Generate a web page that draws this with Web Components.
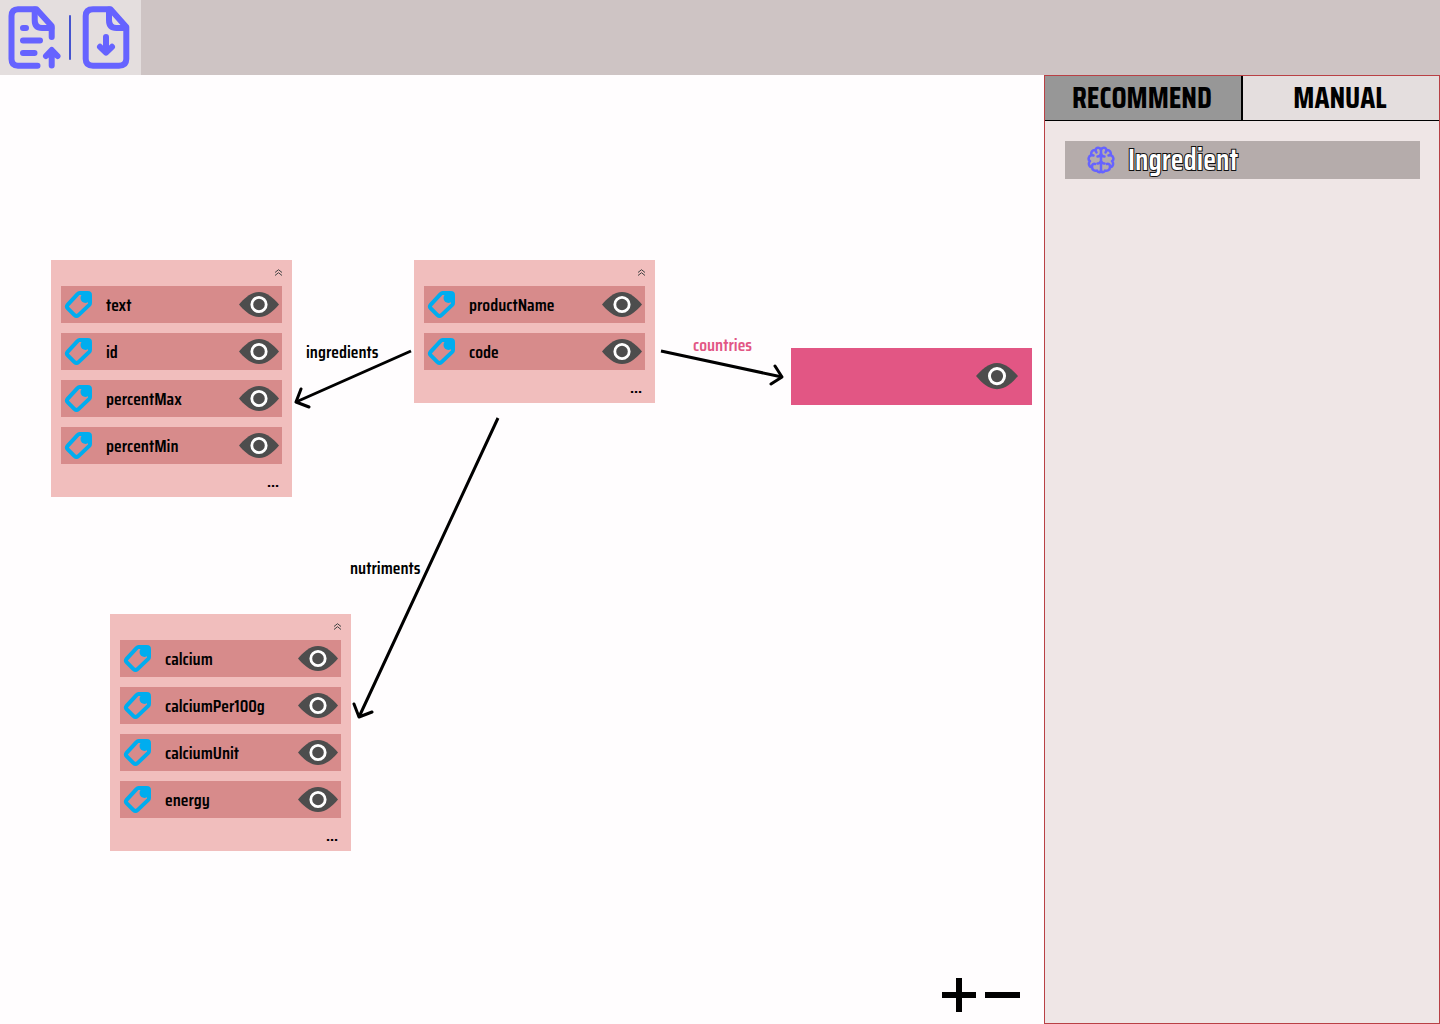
<!DOCTYPE html>
<html lang="en">
<head>
<meta charset="utf-8">
<title>Graph editor</title>
<style>
html, body { height: 100%; margin: 0; }
body { font-family: "Saira Condensed", "Liberation Sans Narrow", Roboto, sans-serif; color: #000; background: #fffdfe; }
</style>
</head>
<body>
<graph-app></graph-app>
<script>
const define = (name, html) => {
  const tpl = document.createElement('template');
  tpl.innerHTML = `<style>:host{display:block;box-sizing:border-box}*{box-sizing:border-box}button{font:inherit;color:inherit;border:0;padding:0;margin:0;background:none;cursor:pointer}svg{display:block}</style>` + html;
  customElements.define(name, class extends HTMLElement {
    constructor() {
      super();
      this.attachShadow({ mode: 'open' }).append(tpl.content.cloneNode(true));
    }
  });
};

define('icon-eye', `
<style>:host{width:40px}svg{width:100%}</style>
<svg viewBox="0 0 40 26" aria-hidden="true">
  <path d="M0 12.500C5 6.500 12 0 20 0S35 6.500 40 12.500C35 18.500 28 25 20 25S5 18.500 0 12.500Z" fill="#4d4d4d"/>
  <circle cx="20" cy="12.500" r="7.200" fill="none" stroke="#fff" stroke-width="2.800"/>
</svg>`);

define('icon-tag', `
<style>:host{width:28px}</style>
<svg width="28" height="28" viewBox="0 1 28 28" fill="none" aria-hidden="true">
  <path d="M15.500 2.500H23.800Q26 2.500 26 4.700V12.300Q26 13.500 25 14.500L14.500 24.500Q12.500 26.300 10.500 24.500L3.800 17.800Q2 16 3.800 14L13.500 3.500Q14.500 2.500 15.500 2.500Z" stroke="#00adef" stroke-width="4" stroke-linejoin="round" transform="translate(0 .6)"/>
  <circle cx="21.500" cy="8" r="5" fill="#00adef"/>
</svg>`);

const lobes = `
    <path d="M14 3.500C13 1 9 1 8.500 4C5.500 3.500 3.500 6 4.500 9C1.200 10 .8 14 3 15.200C.8 17.500 2.200 21 5 21C5 24 8 25.500 10 24.500C11 27 14 26.500 14 24.500"/>
    <path d="M8.500 4.500L9.500 6.500M4.500 9L6.500 9.500M5 20.500C5 18.500 6.500 17.500 8 18M14 8Q13.500 10.500 10.500 10.500M14 15.500Q12.500 18 10.500 17.500"/>`;
define('icon-brain', `
<style>:host{width:28px}</style>
<svg width="28" height="28" viewBox="0 0 28 28" fill="none" stroke="#6663ff" stroke-width="2.500" stroke-linecap="round" stroke-linejoin="round" aria-hidden="true">
  <g>${lobes}</g>
  <g transform="matrix(-1 0 0 1 28 0)">${lobes}</g>
  <path d="M14 3.500V24.500"/>
</svg>`);

define('tool-bar', `
<style>
:host{display:flex;height:75px;background:#cec4c4}
.tools{display:flex;align-items:center;gap:7px;padding:0 8px;background:#e4dede}
.tools i{width:2px;height:45px;border-radius:1px;background:#4553cf}
.tools svg{fill:none;stroke:#6663ff;stroke-width:6;stroke-linecap:round;stroke-linejoin:round}
</style>
<div class="tools" role="toolbar">
  <button aria-label="Import file"><svg width="54" height="64" viewBox="8 6 54 64">
    <path d="M37.500 65.700H18Q11.500 65.700 11.500 59V16Q11.500 9.200 18 9.200H36.500L51.700 26V37"/>
    <path d="M34.700 9.500V20Q34.700 28 42 28H51.500"/>
    <path d="M23 28H26M23 40.500H40M23 53H34.500M51.700 65.500V50.500M46 56L51.700 50L57.500 56"/>
  </svg></button>
  <i></i>
  <button aria-label="Download file"><svg width="55" height="64" viewBox="78 6 55 64">
    <path d="M110.500 9.200H93Q85.700 9.200 85.700 16V59Q85.700 65.700 93 65.700H119Q126.300 65.700 126.300 59V27Z"/>
    <path d="M109 9.500V20Q109 28 116.500 28H126M106 37V52M100 46.800L106 52.700L112 46.800"/>
  </svg></button>
</div>`);

define('property-row', `
<style>
:host{display:flex;align-items:center;height:37px;padding:0 3px;background:#d78b8b;font-size:18px;line-height:24px;font-weight:600}
span{flex:1;padding-left:14px}
</style>
<icon-tag></icon-tag><span><slot></slot></span>
<button aria-label="Toggle visibility"><icon-eye></icon-eye></button>`);

define('graph-node', `
<style>
:host{width:241px;padding:0 10px;background:#f1bebd}
header,footer{display:flex;justify-content:flex-end;align-items:flex-start}
header{height:26px;padding-top:9px}
.rows{display:flex;flex-direction:column;gap:10px}
footer{height:33px;padding:7px 3px 0 0;font-size:18px;line-height:20px;font-weight:600}
</style>
<header><button aria-label="Collapse"><svg width="7" height="7" viewBox="0 0 7 7" fill="none" stroke="#444" stroke-width="1"><path d="M0 3.500L3.500 .7L7 3.500M0 6.500L3.500 3.700L7 6.500"/></svg></button></header>
<div class="rows"><slot></slot></div>
<footer><button aria-label="More properties">...</button></footer>`);

define('literal-node', `
<style>
:host{display:flex;align-items:center;justify-content:flex-end;width:241px;height:57px;padding:1px 14px 0 0;background:#e25684}
icon-eye{width:42px}
</style>
<button aria-label="Toggle visibility"><icon-eye></icon-eye></button>`);

define('graph-canvas', `
<style>
:host{position:relative;overflow:hidden;font-size:18px;line-height:24px;font-weight:600}
.edges{position:absolute;left:0;top:0;overflow:visible;fill:none;stroke:#000;stroke-width:3;stroke-linejoin:round}
.heads{stroke-linecap:round}
graph-node,literal-node,.label{position:absolute}
.pink{color:#e25684}
.zoom{position:absolute;right:23px;bottom:11px;display:flex;gap:6px}
</style>
<svg class="edges" width="1040" height="940" viewBox="0 75 1040 940" aria-hidden="true">
  <path d="M411 351L296 402M661 351L782 377M498 418L359 717"/>
  <path class="heads" d="M301 389L296 402L309 407M775 366L782 377L771 384M354 704L359 717L372 712"/>
</svg>
<graph-node style="left:51px;top:185px">
  <property-row>text</property-row><property-row>id</property-row><property-row>percentMax</property-row><property-row>percentMin</property-row>
</graph-node>
<graph-node style="left:414px;top:185px">
  <property-row>productName</property-row><property-row>code</property-row>
</graph-node>
<graph-node style="left:110px;top:539px">
  <property-row>calcium</property-row><property-row>calciumPer100g</property-row><property-row>calciumUnit</property-row><property-row>energy</property-row>
</graph-node>
<literal-node style="left:791px;top:273px"></literal-node>
<span class="label" style="left:306px;top:265px">ingredients</span>
<span class="label pink" style="left:693px;top:258px">countries</span>
<span class="label" style="left:350px;top:481px">nutriments</span>
<div class="zoom">
  <button aria-label="Zoom in"><svg width="37" height="37" viewBox="0 0 37 37" stroke="#000" stroke-width="6"><path d="M1 19H35M18 2V36"/></svg></button>
  <button aria-label="Zoom out"><svg width="37" height="37" viewBox="0 0 37 37" stroke="#000" stroke-width="6"><path d="M1 19H36"/></svg></button>
</div>`);

define('suggestion-item', `
<style>
button{display:flex;align-items:center;gap:13px;width:100%;height:38px;padding-left:22px;background:#b5acab;font-size:30px;line-height:36px;font-weight:600;color:#fff;text-align:left}
span{-webkit-text-stroke:2px #111;paint-order:stroke fill}
</style>
<button><icon-brain></icon-brain><span><slot></slot></span></button>`);

define('side-panel', `
<style>
:host{display:flex;flex-direction:column;border:1px solid #b94045;background:#efe6e6}
.tabs{display:flex;height:45px;border-bottom:1px solid #000}
.tabs button{flex:1;padding-right:2px;font-size:30px;line-height:40px;font-weight:700;background:#e4dede}
.tabs button[aria-selected=true]{background:#979797;border-right:2px solid #000}
.list{padding:20px 19px 20px 20px}
</style>
<div class="tabs" role="tablist">
  <button role="tab" aria-selected="true">RECOMMEND</button>
  <button role="tab" aria-selected="false">MANUAL</button>
</div>
<div class="list"><suggestion-item>Ingredient</suggestion-item></div>`);

define('graph-app', `
<style>
:host{display:flex;flex-direction:column;height:100%}
main{flex:1;display:flex;min-height:0}
graph-canvas{flex:1}
side-panel{width:27.5%}
</style>
<tool-bar></tool-bar>
<main><graph-canvas></graph-canvas><side-panel></side-panel></main>`);
</script>
</body>
</html>
